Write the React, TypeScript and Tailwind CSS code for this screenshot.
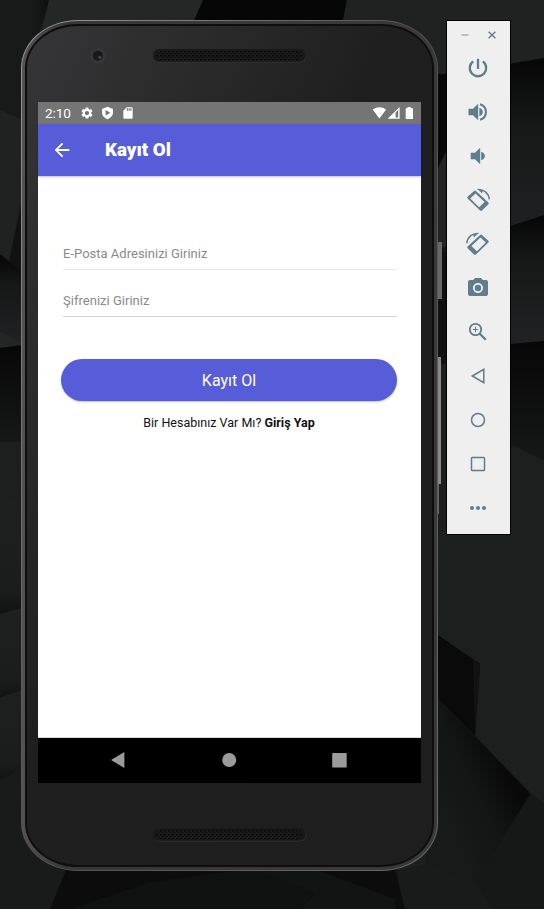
import React from "react";
import { MdSettings, MdSdCard, MdArrowBack, MdCameraAlt } from "react-icons/md";

const Wallpaper = () => (
  <svg className="absolute inset-0" width="544" height="909" viewBox="0 0 544 909">
    <defs>
      <linearGradient id="down" x1="0" y1="0" x2="0" y2="1">
        <stop offset="0" stopColor="#060606" />
        <stop offset="0.35" stopColor="#161717" />
        <stop offset="1" stopColor="#212223" />
      </linearGradient>
      <linearGradient id="pit" x1="0" y1="0" x2="0" y2="1">
        <stop offset="0" stopColor="#070707" />
        <stop offset="1" stopColor="#161717" />
      </linearGradient>
      <linearGradient id="right" x1="0" y1="0" x2="1" y2="0">
        <stop offset="0" stopColor="#191a1a" />
        <stop offset="0.7" stopColor="#171818" />
        <stop offset="1" stopColor="#0e0e0e" />
      </linearGradient>
      <linearGradient id="diag" x1="430" y1="800" x2="503" y2="765" gradientUnits="userSpaceOnUse">
        <stop offset="0" stopColor="#181919" />
        <stop offset="0.6" stopColor="#131414" />
        <stop offset="1" stopColor="#090909" />
      </linearGradient>
      <linearGradient id="fade" x1="0" y1="0" x2="0" y2="1">
        <stop offset="0" stopColor="#1e1f1f" />
        <stop offset="0.8" stopColor="#1b1c1c" />
        <stop offset="1" stopColor="#121212" />
      </linearGradient>
    </defs>
    <rect width="544" height="909" fill="#1d1e1e" />
    <path d="M0 0H50L40 30L22 270L0 254Z" fill="url(#right)" />
    <path d="M0 110L22 120V200L9 262L0 254Z" fill="#202121" />
    <path d="M22 200V272L9 262Z" fill="#101111" />
    <path d="M49 0H204L190 30H42Z" fill="#252626" />
    <path d="M203 0H347L342 30H190Z" fill="#060606" />
    <path d="M347 0H544V60L438 75L342 25Z" fill="#202121" />
    <path d="M0 254L22 272V345L0 331Z" fill="url(#down)" />
    <path d="M0 331L22 344V346L0 348Z" fill="#242525" />
    <path d="M0 348L22 345V442H0Z" fill="url(#pit)" />
    <path d="M0 442H22V497L0 506Z" fill="#1d1e1e" />
    <path d="M0 506L22 496V609L0 614Z" fill="url(#fade)" />
    <path d="M0 614L22 608V690L0 698Z" fill="url(#fade)" />
    <path d="M0 698L22 690V764Q15 775 0 780Z" fill="url(#fade)" />
    <path d="M0 780Q15 775 22 764L68 871L50 909H0Z" fill="#191b1a" />
    <path d="M436 76L544 58V216L436 245Z" fill="url(#down)" />
    <path d="M436 74H447V150L436 172Z" fill="#080808" />
    <path d="M436 172L447 150V258L436 250Z" fill="#222323" />
    <path d="M436 250L544 215V341L510 344H436Z" fill="url(#down)" />
    <path d="M436 250L447 253V364H436Z" fill="#101010" />
    <path d="M510 344L544 341V462L510 444Z" fill="url(#pit)" />
    <path d="M510 444L544 461V804L531 793L475 736L480 664L436 635V364H447V500H510Z" fill="#1d1e1e" />
    <path d="M438 635L480 664L475 736L438 699Z" fill="#0a0a0a" />
    <path d="M473 660L480 664L475 736Z" fill="#131313" />
    <path d="M438 699L475 736L531 794L490 860L478 885L425 866Z" fill="url(#diag)" />
    <path d="M531 793L544 804V909H491L476 884L492 855Z" fill="#161717" />
    <path d="M66 870H400L396 871L405 909H50Z" fill="#0c0c0c" />
    <path d="M70 909L150 882L260 868L315 893L300 909Z" fill="#101111" />
    <path d="M260 871H320L395 899V909H300L315 893Z" fill="#121313" />
    <path d="M396 871L425 864L476 884L491 909H405Z" fill="#191b1a" />
  </svg>
);

const Speaker = () => (
  <svg className="block" width="154" height="14" viewBox="0 0 154 14">
    <defs>
      <pattern id="mesh" width="4" height="4" patternUnits="userSpaceOnUse" x="3" y="2">
        <rect x="0" y="0" width="1.5" height="1.5" fill="#060606" />
        <rect x="2" y="2" width="1" height="1" fill="#0d0d0d" />
      </pattern>
    </defs>
    <rect x="0.5" y="0.8" width="153" height="12.6" rx="6.3" fill="#343434" />
    <rect x="0" y="0" width="152.8" height="12.8" rx="6.4" fill="#191919" />
    <rect x="3" y="1.6" width="147" height="9.8" rx="5" fill="url(#mesh)" />
  </svg>
);

const slate = "#607d8b";

const PowerIcon = () => (
  <svg width="24" height="24" viewBox="0 0 24 24" fill="none" stroke={slate} strokeWidth="2.3">
    <path d="M12 2.8V13" />
    <path d="M7.2 5.4A8.2 8.2 0 1 0 16.8 5.4" />
  </svg>
);
const VolumeUpIcon = () => (
  <svg width="24" height="24" viewBox="0 0 24 24" fill={slate}>
    <path d="M2.5 8.8H7L12.2 3.8V20.2L7 15.2H2.5Z" />
    <path d="M13.4 7.8Q16.8 9.2 16.8 12T13.4 16.2Z" />
    <path d="M14 4.2A8.1 8.1 0 0 1 14 19.8" fill="none" stroke={slate} strokeWidth="2.1" />
  </svg>
);
const VolumeDownIcon = () => (
  <svg width="24" height="24" viewBox="0 0 24 24" fill={slate}>
    <path d="M4.7 8.8H9L14.2 3.8V20.2L9 15.2H4.7Z" />
    <path d="M15.2 7.8Q18.9 9.2 18.9 12T15.2 16.2Z" />
  </svg>
);
const RotateIcon = ({ flip = false }: { flip?: boolean }) => (
  <svg className={flip ? "-scale-x-100" : ""} width="26" height="26" viewBox="0 0 26 26">
    <path
      fill={slate}
      fillRule="evenodd"
      d="M9.1 4Q10 3.2 10.9 4L23.4 15.6Q24.2 16.4 23.4 17.2L17 23.6Q16 24.4 15.1 23.6L2.6 11.5Q1.8 10.6 2.6 9.8ZM10.5 6.4L5.2 11.6L14.1 20.3L19.6 14.9Z"
    />
    <path d="M12.6 2.4C18.5 1.8 23.8 6.3 24.3 12.4" fill="none" stroke={slate} strokeWidth="1.4" />
    <path d="M12.4 2L16.9 6.2L18.2 3.4Z" fill={slate} />
  </svg>
);
const ZoomIcon = () => (
  <svg width="24" height="24" viewBox="0 0 24 24" fill="none" stroke={slate}>
    <circle cx="9.5" cy="9.5" r="5.7" strokeWidth="1.8" />
    <path d="M13.8 13.8L19.8 19.8" strokeWidth="2.2" />
    <path d="M9.5 6.8V12.2M6.8 9.5H12.2" strokeWidth="1.1" />
  </svg>
);
const BackIcon = () => (
  <svg width="24" height="24" viewBox="0 0 24 24" fill="none" stroke={slate} strokeWidth="1.5">
    <path d="M6.3 12L17.8 5.3V18.7Z" />
  </svg>
);
const HomeIcon = () => (
  <svg width="24" height="24" viewBox="0 0 24 24" fill="none" stroke={slate} strokeWidth="1.5">
    <circle cx="12" cy="12" r="6.5" />
  </svg>
);
const OverviewIcon = () => (
  <svg width="24" height="24" viewBox="0 0 24 24" fill="none" stroke={slate} strokeWidth="1.5">
    <rect x="5.5" y="5.5" width="13" height="13" rx="0.8" />
  </svg>
);
const MoreIcon = () => (
  <svg width="24" height="24" viewBox="0 0 24 24" fill={slate}>
    <circle cx="6" cy="12" r="2" />
    <circle cx="12" cy="12" r="2" />
    <circle cx="18" cy="12" r="2" />
  </svg>
);

const tools = [
  <PowerIcon />,
  <VolumeUpIcon />,
  <VolumeDownIcon />,
  <RotateIcon />,
  <RotateIcon flip />,
  <MdCameraAlt size={24} color={slate} />,
  <ZoomIcon />,
  <BackIcon />,
  <HomeIcon />,
  <OverviewIcon />,
  <MoreIcon />,
];

const StatusBar = () => (
  <div className="flex h-[22px] items-center bg-[#757575] pl-[7px] pr-[7px] text-white">
    <span className="w-[35px] pt-px text-[13.6px] leading-[21px] tracking-[-0.1px]">2:10</span>
    <MdSettings size={14} className="mr-[7px]" />
    <svg className="mr-[7px]" width="13" height="14" viewBox="0 0 13 14">
      <path
        fill="white"
        fillRule="evenodd"
        d="M6.5 0.8L12 2.9V6.6C12 9.6 9.7 12.2 6.5 13.2C3.3 12.2 1 9.6 1 6.6V2.9ZM4.6 4V9.6L9.3 6.8Z"
      />
    </svg>
    <MdSdCard size={14} />
    <svg className="ml-auto" width="42" height="14" viewBox="0 0 42 14">
      <path d="M0.7 3.6Q7.4 -1 14.1 3.6L7.4 12.6Z" fill="white" />
      <path d="M15.6 12.8L27.6 1V12.8Z" fill="white" />
      <path d="M23.6 6.6L26.2 4V11.6H23.6Z" fill="#757575" />
      <path d="M35.5 1H38.8V2.2H41V13H33.7V2.2H35.5Z" fill="white" />
    </svg>
  </div>
);

const Screen = () => (
  <div className="flex h-[681px] w-[383px] flex-col bg-white">
    <StatusBar />
    <header className="flex h-[52px] items-center bg-[#575cd9] pb-px pl-[13px] text-white shadow-[0_1px_2px_rgba(0,0,0,0.25)]">
      <MdArrowBack size={22} />
      <h1 className="ml-[32px] pt-[2px] text-[18.7px] font-black">Kayıt Ol</h1>
    </header>
    <main className="flex flex-1 flex-col pl-[23px] pr-6 pt-[62px]">
      <div className="ml-0.5 h-8 border-b border-[#e8e8e8] text-[13px] leading-[31px] tracking-[0.01px] text-[#8a8a8a]">
        E-Posta Adresinizi Giriniz
      </div>
      <div className="ml-0.5 mt-[15px] h-8 border-b border-[#d3d3d3] text-[13px] leading-[31px] tracking-[0.02px] text-[#8a8a8a]">
        Şifrenizi Giriniz
      </div>
      <button className="mt-[42px] h-[42px] rounded-full bg-[#575cd9] pt-px text-[16px] text-white shadow-[0_1px_2px_rgba(0,0,0,0.25)]">
        Kayıt Ol
      </button>
      <p className="mt-[12px] text-center text-[12.5px] leading-5 text-[#111]">
        Bir Hesabınız Var Mı? <b>Giriş Yap</b>
      </p>
    </main>
    <nav className="flex h-[46px] items-center justify-center border-t border-[#d8d8d8] bg-black pb-px">
      <svg width="238" height="18" viewBox="0 0 238 18" fill="#9b9b9b">
        <path d="M0 9L13.4 1V17Z" />
        <circle cx="118.2" cy="9" r="7" />
        <rect x="221.2" y="2" width="14.5" height="14.5" rx="0.7" />
      </svg>
    </nav>
  </div>
);

const Phone = () => (
  <div className="h-[851px] w-[417px] rounded-[57px/48px] bg-linear-to-br from-[#99999b] via-[#514e50] to-[#6c6c6c] p-px">
    <div className="h-full rounded-[56px/47px] bg-linear-to-r from-[#555254] via-[#383738] via-10% to-[#3b383a] p-[3px]">
      <div className="h-full rounded-[53px/44px] bg-[#0e0e0e] p-[2px]">
        <div className="flex h-full flex-col items-start rounded-[51px/42px] bg-linear-to-br from-[#363638] via-[#1f1f1f] via-45% to-[#1e1e1e]">
          <div className="flex h-[76px] w-full pl-[62px] pt-[20px]">
            <svg className="mt-px" width="18" height="18" viewBox="0 0 18 18">
              <circle cx="8.8" cy="8.8" r="8" fill="#363638" />
              <circle cx="8.8" cy="8.8" r="5" fill="#19191d" />
              <circle cx="10.8" cy="10.3" r="1.4" fill="#61404d" />
            </svg>
            <div className="ml-[46px] mt-[3px]">
              <Speaker />
            </div>
          </div>
          <div className="ml-[11px]">
            <Screen />
          </div>
          <div className="ml-[126px] mt-[45px]">
            <Speaker />
          </div>
        </div>
      </div>
    </div>
  </div>
);

export default function App() {
  return (
    <div className="relative h-[909px] w-[544px] overflow-hidden bg-[#1d1e1e] font-['Roboto',sans-serif]">
      <Wallpaper />
      <div className="relative flex items-start pl-[21px] pt-5">
        <Phone />
        <div className="flex w-[8px] flex-col pt-[222px]">
          <div className="h-[57px] w-[4px] bg-[#686868]" />
          <div className="mt-[58px] h-[127px] w-[3px] bg-[#888]" />
          <div className="h-[30px] w-px bg-[#666]" />
        </div>
        <aside className="flex h-[515px] w-[65px] flex-col items-center border border-black bg-[#efefef]">
          <div className="flex h-[25px] w-full shrink-0 items-end">
            <svg width="63" height="22" viewBox="0 0 63 22" fill="none" stroke={slate}>
              <path d="M14.5 11H21.5" strokeWidth="1.2" opacity="0.7" />
              <path d="M41.6 7.7L48.4 14.3M48.4 7.7L41.6 14.3" strokeWidth="1.4" />
            </svg>
          </div>
          {tools.map((tool, i) => (
            <div key={i} className="flex h-11 shrink-0 items-center justify-center pr-px">
              {tool}
            </div>
          ))}
        </aside>
      </div>
    </div>
  );
}
